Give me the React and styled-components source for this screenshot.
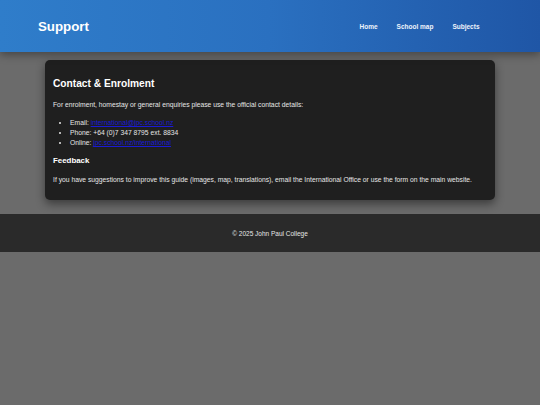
import React from "react";
import styled, { createGlobalStyle } from "styled-components";

const GlobalStyle = createGlobalStyle`
  html, body {
    margin: 0;
    padding: 0;
    background: #6b6b6b;
    font-family: "Liberation Sans", Arial, sans-serif;
    color: #eeeeee;
  }
  * { box-sizing: border-box; }
`;

const Header = styled.header`
  height: 52px;
  display: flex;
  align-items: center;
  justify-content: space-between;
  padding: 0 51px 0 38px;
  background: linear-gradient(90deg, #2f7dca 0%, #2a70c0 50%, #1f56a6 100%);
  box-shadow: 0 3px 8px rgba(0, 0, 0, 0.35);
  position: relative;
  z-index: 1;
`;

const Brand = styled.h1`
  margin: 0;
  font-size: 13.3px;
  font-weight: 700;
  color: #ffffff;
`;

const Nav = styled.nav`
  display: flex;
`;

const NavLink = styled.a`
  padding: 0 9.5px;
  font-size: 6.5px;
  font-weight: 700;
  color: #eef3fb;
  text-decoration: none;
`;

const Main = styled.main`
  padding: 8px 0 14px;
`;

const Card = styled.section`
  width: 450px;
  margin: 0 auto;
  padding: 18px 8px 15px;
  background: #1f1f1f;
  border-radius: 5px;
  box-shadow: 0 4px 10px rgba(0, 0, 0, 0.45);
`;

const Title = styled.h2`
  margin: 0 0 11px;
  font-size: 10.2px;
  font-weight: 700;
  color: #ffffff;
`;

const SubTitle = styled.h3`
  margin: 8px 0 10px;
  font-size: 7.9px;
  font-weight: 700;
  color: #ffffff;
`;

const Text = styled.p`
  margin: 0;
  font-size: 6.75px;
  line-height: 10px;
  color: #e6e6e6;
`;

const List = styled.ul`
  margin: 8px 0 0;
  padding-left: 17px;
  font-size: 6.75px;
  line-height: 10px;
  color: #e6e6e6;
`;

const Link = styled.a`
  color: #1a1ad6;
  text-decoration: underline;
`;

const Footer = styled.footer`
  height: 38px;
  display: flex;
  align-items: center;
  justify-content: center;
  background: #2a2a2a;
  font-size: 6.5px;
  color: #e6e6e6;
`;

export default function App() {
  return (
    <>
      <GlobalStyle />
      <Header>
        <Brand>Support</Brand>
        <Nav>
          <NavLink href="#">Home</NavLink>
          <NavLink href="#">School map</NavLink>
          <NavLink href="#">Subjects</NavLink>
        </Nav>
      </Header>
      <Main>
        <Card>
          <Title>Contact &amp; Enrolment</Title>
          <Text>
            For enrolment, homestay or general enquiries please use the official
            contact details:
          </Text>
          <List>
            <li>
              Email: <Link href="#">international@jpc.school.nz</Link>
            </li>
            <li>Phone: +64 (0)7 347 8795 ext. 8834</li>
            <li>
              Online: <Link href="#">jpc.school.nz/international</Link>
            </li>
          </List>
          <SubTitle>Feedback</SubTitle>
          <Text>
            If you have suggestions to improve this guide (images, map,
            translations), email the International Office or use the form on the
            main website.
          </Text>
        </Card>
      </Main>
      <Footer>© 2025 John Paul College</Footer>
    </>
  );
}
